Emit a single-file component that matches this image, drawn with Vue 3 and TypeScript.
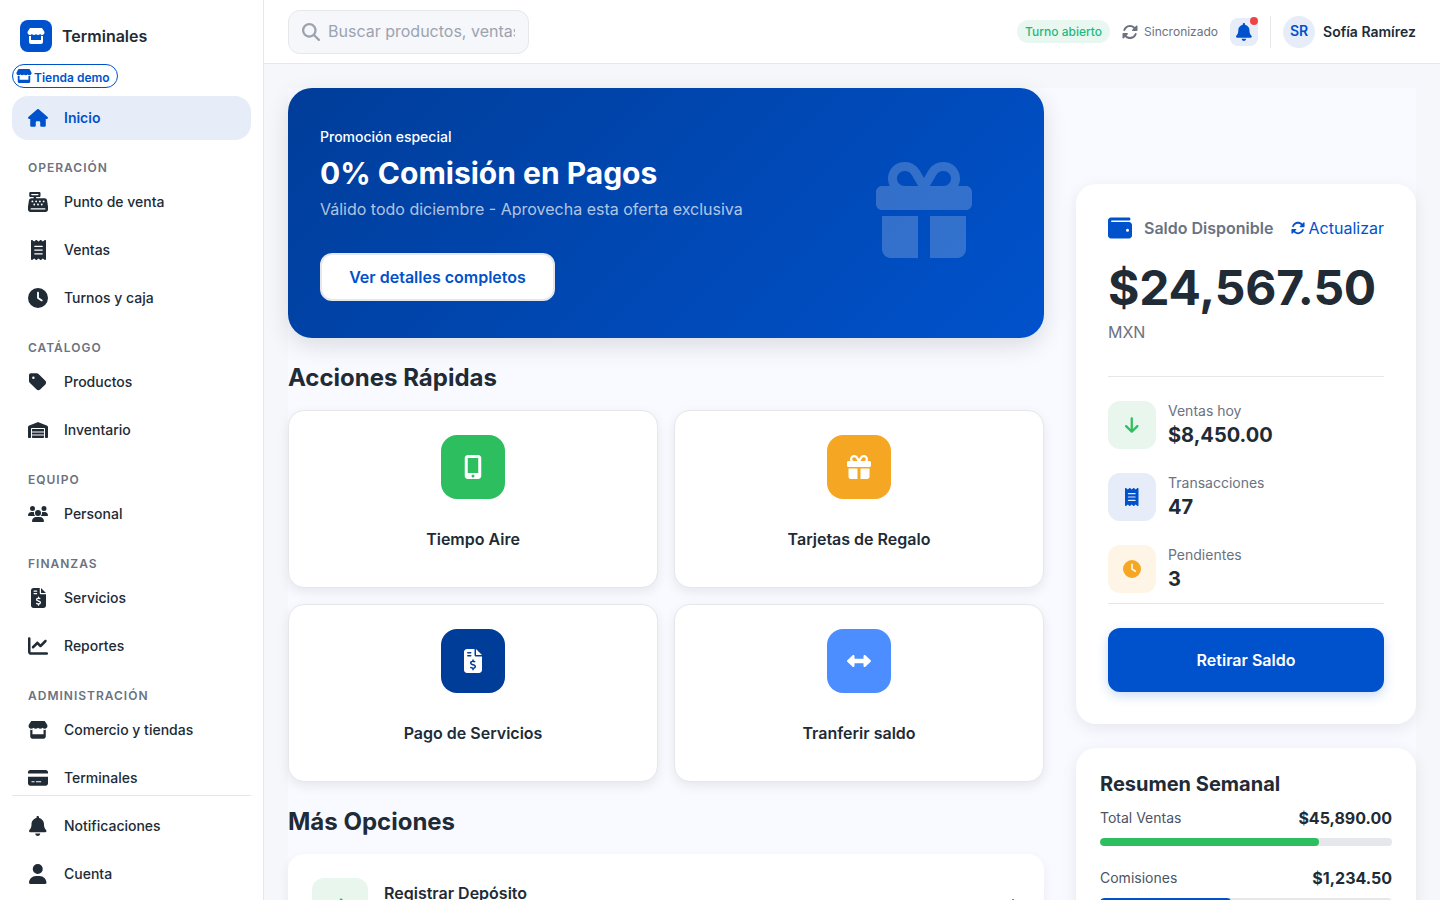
<script setup lang="ts">
import { h } from "vue";

type IconDef = { vb: string; d: string };

const icons: Record<string, IconDef> = {
  house: { vb: "0 0 576 512", d: "M575.8 255.5c0 18-15 32.1-32 32.1h-32l.7 160.2c0 2.7-.2 5.4-.5 8.1V472c0 22.1-17.9 40-40 40H456c-1.1 0-2.2 0-3.3-.1c-1.4 .1-2.8 .1-4.2 .1H416 392c-22.1 0-40-17.9-40-40V448 384c0-17.7-14.3-32-32-32H256c-17.7 0-32 14.3-32 32v64 24c0 22.1-17.9 40-40 40H160 128.1c-1.5 0-3-.1-4.5-.2c-1.2 .1-2.4 .2-3.6 .2H104c-22.1 0-40-17.9-40-40V360c0-.9 0-1.9 .1-2.8V287.6H32c-18 0-32-14-32-32.1c0-9 3-17 10-24L266.4 8c7-7 15-8 22-8s15 2 21 7L564.8 231.5c8 7 12 15 11 24z" },
  store: { vb: "0 0 576 512", d: "M547.6 103.8L490.3 13.1C485.2 5 476.1 0 466.4 0H109.6C99.9 0 90.8 5 85.7 13.1L28.3 103.8c-29.6 46.8-3.4 111.9 51.9 119.4c4 .5 8.1 .8 12.1 .8c26.1 0 49.3-11.4 65.2-29c15.9 17.6 39.1 29 65.2 29c26.1 0 49.3-11.4 65.2-29c15.9 17.6 39.1 29 65.2 29c26.2 0 49.3-11.4 65.2-29c16 17.6 39.1 29 65.2 29c4.1 0 8.1-.3 12.1-.8c55.5-7.4 81.8-72.5 52.1-119.4zM499.7 254.9l-.1 0c-5.3 .7-10.7 1.1-16.2 1.1c-12.4 0-24.3-1.9-35.4-5.3V384H128V250.6c-11.2 3.5-23.2 5.4-35.6 5.4c-5.5 0-11-.4-16.3-1.1l-.1 0c-4.1-.6-8.1-1.3-12-2.3V384v64c0 35.3 28.7 64 64 64H448c35.3 0 64-28.7 64-64V384 252.6c-4 1-8 1.8-12.3 2.3z" },
  register: { vb: "0 0 512 512", d: "M64 0C46.3 0 32 14.3 32 32V96c0 17.7 14.3 32 32 32h80v32H87c-31.6 0-58.5 23.1-63.3 54.4L1.1 364.1C.4 368.8 0 373.6 0 378.4V448c0 35.3 28.7 64 64 64H448c35.3 0 64-28.7 64-64V378.4c0-4.8-.4-9.6-1.1-14.4L488.2 214.4C483.5 183.1 456.6 160 425 160H208V128h80c17.7 0 32-14.3 32-32V32c0-17.7-14.3-32-32-32H64zM96 48H256c8.8 0 16 7.2 16 16s-7.2 16-16 16H96c-8.8 0-16-7.2-16-16s7.2-16 16-16zM64 432c0-8.8 7.2-16 16-16H432c8.8 0 16 7.2 16 16s-7.2 16-16 16H80c-8.8 0-16-7.2-16-16zm48-168a24 24 0 1 1 0-48 24 24 0 1 1 0 48zm120-24a24 24 0 1 1 -48 0 24 24 0 1 1 48 0zM160 344a24 24 0 1 1 0-48 24 24 0 1 1 0 48zM328 240a24 24 0 1 1 -48 0 24 24 0 1 1 48 0zM256 344a24 24 0 1 1 0-48 24 24 0 1 1 0 48zM424 240a24 24 0 1 1 -48 0 24 24 0 1 1 48 0zM352 344a24 24 0 1 1 0-48 24 24 0 1 1 0 48z" },
  receipt: { vb: "0 0 384 512", d: "M14 2.2C22.5-1.7 32.5-.3 39.6 5.8L80 40.4 120.4 5.8c9-7.7 22.3-7.7 31.2 0L192 40.4 232.4 5.8c9-7.7 22.2-7.7 31.2 0L304 40.4 344.4 5.8c7.1-6.1 17.1-7.5 25.6-3.6s14 12.4 14 21.8V488c0 9.4-5.5 17.9-14 21.8s-18.5 2.5-25.6-3.6L304 471.6l-40.4 34.6c-9 7.7-22.3 7.7-31.2 0L192 471.6l-40.4 34.6c-9 7.7-22.2 7.7-31.2 0L80 471.6 39.6 506.2c-7.1 6.1-17.1 7.5-25.6 3.6S0 497.4 0 488V24C0 14.6 5.5 6.1 14 2.2zM96 144c-8.8 0-16 7.2-16 16s7.2 16 16 16H288c8.8 0 16-7.2 16-16s-7.2-16-16-16H96zM80 352c0 8.8 7.2 16 16 16H288c8.8 0 16-7.2 16-16s-7.2-16-16-16H96c-8.8 0-16 7.2-16 16zM96 240c-8.8 0-16 7.2-16 16s7.2 16 16 16H288c8.8 0 16-7.2 16-16s-7.2-16-16-16H96z" },
  clock: { vb: "0 0 512 512", d: "M256 0a256 256 0 1 1 0 512A256 256 0 1 1 256 0zM232 120V256c0 8 4 15.5 10.7 20l96 64c11 7.4 25.9 4.4 33.3-6.7s4.4-25.9-6.7-33.3L280 243.2V120c0-13.3-10.7-24-24-24s-24 10.7-24 24z" },
  tag: { vb: "0 0 448 512", d: "M0 80V229.5c0 17 6.7 33.3 18.7 45.3l176 176c25 25 65.5 25 90.5 0L418.7 317.3c25-25 25-65.5 0-90.5l-176-176c-12-12-28.3-18.7-45.3-18.7H48C21.5 32 0 53.5 0 80zm112 32a32 32 0 1 1 0 64 32 32 0 1 1 0-64z" },
  warehouse: { vb: "0 0 640 512", d: "M0 488V171.3c0-26.2 15.9-49.7 40.2-59.4L308.1 4.8c7.6-3.1 16.1-3.1 23.8 0L599.8 111.9c24.3 9.7 40.2 33.3 40.2 59.4V488c0 13.3-10.7 24-24 24H568c-13.3 0-24-10.7-24-24V224c0-17.7-14.3-32-32-32H128c-17.7 0-32 14.3-32 32V488c0 13.3-10.7 24-24 24H24c-13.3 0-24-10.7-24-24zm488 24H152c-13.3 0-24-10.7-24-24V432H512v56c0 13.3-10.7 24-24 24zM128 400V336H512v64H128zm0-96V224H512v80H128z" },
  users: { vb: "0 0 640 512", d: "M144 0a80 80 0 1 1 0 160A80 80 0 1 1 144 0zM512 0a80 80 0 1 1 0 160A80 80 0 1 1 512 0zM0 298.7C0 239.8 47.8 192 106.7 192h42.7c15.9 0 31 3.5 44.6 9.7c-1.3 7.2-1.9 14.7-1.9 22.3c0 38.2 16.8 72.5 43.3 96c-.2 0-.4 0-.7 0H21.3C9.6 320 0 310.4 0 298.7zM405.3 320c-.2 0-.4 0-.7 0c26.6-23.5 43.3-57.8 43.3-96c0-7.6-.7-15-1.9-22.3c13.6-6.3 28.7-9.7 44.6-9.7h42.7C592.2 192 640 239.8 640 298.7c0 11.8-9.6 21.3-21.3 21.3H405.3zM224 224a96 96 0 1 1 192 0 96 96 0 1 1 -192 0zM128 485.3C128 411.7 187.7 352 261.3 352H378.7C452.3 352 512 411.7 512 485.3c0 14.7-11.9 26.7-26.7 26.7H154.7c-14.7 0-26.7-11.9-26.7-26.7z" },
  invoice: { vb: "0 0 384 512", d: "M64 0C28.7 0 0 28.7 0 64V448c0 35.3 28.7 64 64 64H320c35.3 0 64-28.7 64-64V160H256c-17.7 0-32-14.3-32-32V0H64zM256 0V128H384L256 0zM64 80c0-8.8 7.2-16 16-16h64c8.8 0 16 7.2 16 16s-7.2 16-16 16H80c-8.8 0-16-7.2-16-16zm0 64c0-8.8 7.2-16 16-16h64c8.8 0 16 7.2 16 16s-7.2 16-16 16H80c-8.8 0-16-7.2-16-16zm128 72c8.8 0 16 7.2 16 16v17.3c8.5 1.2 16.7 3.1 24.1 5.1c8.5 2.3 13.6 11 11.3 19.6s-11 13.6-19.6 11.3c-11.1-3-22-5.2-32.1-5.3c-8.4-.1-17.4 1.8-23.6 5.5c-5.7 3.4-8.1 7.3-8.1 12.8c0 3.7 1.3 6.5 7.3 10.1c6.9 4.1 16.6 7.1 29.2 10.9l.5 .1 0 0 0 0c11.3 3.4 25.3 7.6 36.3 14.6c12.1 7.6 22.4 19.7 22.7 38.2c.3 19.3-9.6 33.3-22.9 41.6c-7.7 4.8-16.4 7.6-25.1 9.1V440c0 8.8-7.2 16-16 16s-16-7.2-16-16V422.2c-11.2-2.1-21.7-5.7-30.9-8.9l0 0c-2.1-.7-4.2-1.4-6.2-2.1c-8.4-2.8-12.9-11.9-10.1-20.2s11.9-12.9 20.2-10.1c2.5 .8 4.8 1.6 7.1 2.4l0 0 0 0 0 0c13.6 4.6 24.6 8.4 36.3 8.7c9.1 .3 17.9-1.7 23.7-5.3c5.1-3.2 7.9-7.3 7.8-14c-.1-4.6-1.8-7.8-7.7-11.6c-6.8-4.3-16.5-7.4-29-11.2l-1.6-.5 0 0c-11-3.3-24.3-7.3-34.8-13.7c-12-7.2-22.6-18.9-22.7-37.3c-.1-19.4 10.8-32.8 23.8-40.5c7.5-4.4 15.8-7.2 24.1-8.7V232c0-8.8 7.2-16 16-16z" },
  chart: { vb: "0 0 512 512", d: "M64 64c0-17.7-14.3-32-32-32S0 46.3 0 64V400c0 44.2 35.8 80 80 80H480c17.7 0 32-14.3 32-32s-14.3-32-32-32H80c-8.8 0-16-7.2-16-16V64zm406.6 86.6c12.5-12.5 12.5-32.8 0-45.3s-32.8-12.5-45.3 0L320 210.7l-57.4-57.4c-12.5-12.5-32.8-12.5-45.3 0l-112 112c-12.5 12.5-12.5 32.8 0 45.3s32.8 12.5 45.3 0L240 221.3l57.4 57.4c12.5 12.5 32.8 12.5 45.3 0l128-128z" },
  card: { vb: "0 0 576 512", d: "M64 32C28.7 32 0 60.7 0 96v32H576V96c0-35.3-28.7-64-64-64H64zM576 224H0V416c0 35.3 28.7 64 64 64H512c35.3 0 64-28.7 64-64V224zM112 352h64c8.8 0 16 7.2 16 16s-7.2 16-16 16H112c-8.8 0-16-7.2-16-16s7.2-16 16-16zm112 16c0-8.8 7.2-16 16-16H368c8.8 0 16 7.2 16 16s-7.2 16-16 16H240c-8.8 0-16-7.2-16-16z" },
  bell: { vb: "0 0 448 512", d: "M224 0c-17.7 0-32 14.3-32 32V51.2C119 66 64 130.6 64 208v18.8c0 47-17.3 92.4-48.5 127.6l-7.4 8.3c-8.4 9.4-10.4 22.9-5.3 34.4S19.4 416 32 416H416c12.6 0 24-7.4 29.2-18.9s3.1-25-5.3-34.4l-7.4-8.3C401.3 319.2 384 273.9 384 226.8V208c0-77.4-55-142-128-156.8V32c0-17.7-14.3-32-32-32zm45.3 493.3c12-12 18.7-28.3 18.7-45.3H224 160c0 17 6.7 33.3 18.7 45.3s28.3 18.7 45.3 18.7s33.3-6.7 45.3-18.7z" },
  user: { vb: "0 0 448 512", d: "M224 256A128 128 0 1 0 224 0a128 128 0 1 0 0 256zm-45.7 48C79.8 304 0 383.8 0 482.3C0 498.7 13.3 512 29.7 512H418.3c16.4 0 29.7-13.3 29.7-29.7C448 383.8 368.2 304 269.7 304H178.3z" },
  search: { vb: "0 0 512 512", d: "M416 208c0 45.9-14.9 88.3-40 122.7L502.6 457.4c12.5 12.5 12.5 32.8 0 45.3s-32.8 12.5-45.3 0L330.7 376c-34.4 25.2-76.8 40-122.7 40C93.1 416 0 322.9 0 208S93.1 0 208 0S416 93.1 416 208zM208 352a144 144 0 1 0 0-288 144 144 0 1 0 0 288z" },
  rotate: { vb: "0 0 512 512", d: "M142.9 142.9c62.2-62.2 162.7-62.5 225.3-1L327 183c-6.9 6.9-8.9 17.2-5.2 26.2s12.5 14.8 22.2 14.8H463.5c0 0 0 0 0 0H472c13.3 0 24-10.7 24-24V72c0-9.7-5.8-18.5-14.8-22.2s-19.3-1.7-26.2 5.2L413.4 96.6c-87.6-86.5-228.7-86.2-315.8 1C73.2 122 55.6 150.7 44.8 181.4c-5.9 16.7 2.9 34.9 19.5 40.8s34.9-2.9 40.8-19.5c7.7-21.8 20.2-42.3 37.8-59.8zM16 312v7.6 .7V440c0 9.7 5.8 18.5 14.8 22.2s19.3 1.7 26.2-5.2l41.6-41.6c87.6 86.5 228.7 86.2 315.8-1c24.4-24.4 42.1-53.1 52.9-83.7c5.9-16.7-2.9-34.9-19.5-40.8s-34.9 2.9-40.8 19.5c-7.7 21.8-20.2 42.3-37.8 59.8c-62.2 62.2-162.7 62.5-225.3 1L185 329c6.9-6.9 8.9-17.2 5.2-26.2s-12.5-14.8-22.2-14.8H48.4h-.7H40c-13.3 0-24 10.7-24 24z" },
  wallet: { vb: "0 0 512 512", d: "M64 32C28.7 32 0 60.7 0 96V416c0 35.3 28.7 64 64 64H448c35.3 0 64-28.7 64-64V192c0-35.3-28.7-64-64-64H80c-8.8 0-16-7.2-16-16s7.2-16 16-16H448c17.7 0 32-14.3 32-32s-14.3-32-32-32H64zM416 272a32 32 0 1 1 0 64 32 32 0 1 1 0-64z" },
  gift: { vb: "0 0 512 512", d: "M190.5 68.8L225.3 128H224 152c-22.1 0-40-17.9-40-40s17.9-40 40-40h2.2c14.9 0 28.8 7.9 36.3 20.8zM64 88c0 14.4 3.5 28 9.6 40H32c-17.7 0-32 14.3-32 32v64c0 17.7 14.3 32 32 32H480c17.7 0 32-14.3 32-32V160c0-17.7-14.3-32-32-32H438.4c6.1-12 9.6-25.6 9.6-40c0-48.6-39.4-88-88-88h-2.2c-31.9 0-61.5 16.9-77.7 44.4L256 85.5l-24.1-41C215.7 16.9 186.1 0 154.2 0H152C103.4 0 64 39.4 64 88zm336 0c0 22.1-17.9 40-40 40H288h-1.3l34.8-59.2C329.1 55.9 342.9 48 357.8 48H360c22.1 0 40 17.9 40 40zM32 288V464c0 26.5 21.5 48 48 48H224V288H32zM288 512H432c26.5 0 48-21.5 48-48V288H288V512z" },
  mobile: { vb: "0 0 384 512", d: "M16 64C16 28.7 44.7 0 80 0H304c35.3 0 64 28.7 64 64V448c0 35.3-28.7 64-64 64H80c-35.3 0-64-28.7-64-64V64zM224 448a32 32 0 1 0 -64 0 32 32 0 1 0 64 0zM304 64H80V384H304V64z" },
  leftRight: { vb: "0 0 512 512", d: "M504.3 273.6c4.9-4.5 7.7-10.9 7.7-17.6s-2.8-13-7.7-17.6l-112-104c-7-6.5-17.2-8.2-25.9-4.4s-14.4 12.5-14.4 22l0 56-192 0 0-56c0-9.5-5.7-18.2-14.4-22s-18.9-2.1-25.9 4.4l-112 104C2.8 243 0 249.3 0 256s2.8 13 7.7 17.6l112 104c7 6.5 17.2 8.2 25.9 4.4s14.4-12.5 14.4-22l0-56 192 0 0 56c0 9.5 5.7 18.2 14.4 22s18.9 2.1 25.9-4.4l112-104z" },
  arrowDown: { vb: "0 0 384 512", d: "M169.4 470.6c12.5 12.5 32.8 12.5 45.3 0l160-160c12.5-12.5 12.5-32.8 0-45.3s-32.8-12.5-45.3 0L224 370.8 224 64c0-17.7-14.3-32-32-32s-32 14.3-32 32l0 306.7L54.6 265.4c-12.5-12.5-32.8-12.5-45.3 0s-12.5 32.8 0 45.3l160 160z" },
  arrowRight: { vb: "0 0 448 512", d: "M438.6 278.6c12.5-12.5 12.5-32.8 0-45.3l-160-160c-12.5-12.5-32.8-12.5-45.3 0s-12.5 32.8 0 45.3L338.8 224 32 224c-17.7 0-32 14.3-32 32s14.3 32 32 32l306.7 0L233.4 393.4c-12.5 12.5-12.5 32.8 0 45.3s32.8 12.5 45.3 0l160-160z" },
  chevron: { vb: "0 0 320 512", d: "M310.6 233.4c12.5 12.5 12.5 32.8 0 45.3l-192 192c-12.5 12.5-32.8 12.5-45.3 0s-12.5-32.8 0-45.3L242.7 256 73.4 86.6c-12.5-12.5-12.5-32.8 0-45.3s32.8-12.5 45.3 0l192 192z" },
};

// height comes from the aspect of each glyph, size is the larger side
const Icon = (props: { name: string; size: number }) => {
  const def = icons[props.name];
  const [, , w, ht] = def.vb.split(" ").map(Number);
  const scale = props.size / Math.max(w, ht);
  return h(
    "svg",
    { viewBox: def.vb, width: w * scale, height: ht * scale, fill: "currentColor", "aria-hidden": "true", style: "display:block;flex:none" },
    [h("path", { d: def.d })],
  );
};
Icon.props = ["name", "size"];

const navGroups = [
  { title: "Operación", items: [{ label: "Punto de venta", icon: "register" }, { label: "Ventas", icon: "receipt" }, { label: "Turnos y caja", icon: "clock" }] },
  { title: "Catálogo", items: [{ label: "Productos", icon: "tag" }, { label: "Inventario", icon: "warehouse" }] },
  { title: "Equipo", items: [{ label: "Personal", icon: "users" }] },
  { title: "Finanzas", items: [{ label: "Servicios", icon: "invoice" }, { label: "Reportes", icon: "chart" }] },
  { title: "Administración", items: [{ label: "Comercio y tiendas", icon: "store" }, { label: "Terminales", icon: "card" }] },
];

const footerItems = [
  { label: "Notificaciones", icon: "bell" },
  { label: "Cuenta", icon: "user" },
];

const quickActions = [
  { label: "Tiempo Aire", icon: "mobile", color: "#2dbf5f" },
  { label: "Tarjetas de Regalo", icon: "gift", color: "#f5a623" },
  { label: "Pago de Servicios", icon: "invoice", color: "#003d99" },
  { label: "Tranferir saldo", icon: "leftRight", color: "#4c8dff" },
];

const stats = [
  { label: "Ventas hoy", value: "$8,450.00", icon: "arrowDown", cls: "green" },
  { label: "Transacciones", value: "47", icon: "receipt", cls: "blue" },
  { label: "Pendientes", value: "3", icon: "clock", cls: "orange" },
];

const weekly = [
  { label: "Total Ventas", value: "$45,890.00", pct: 75, color: "#2dbf5f" },
  { label: "Comisiones", value: "$1,234.50", pct: 45, color: "#0052cc" },
];
</script>

<template>
  <div class="app">
    <aside class="sidebar">
      <div class="brand">
        <div class="brand-logo"><Icon name="store" :size="18" /></div>
        <span class="brand-name">Terminales</span>
      </div>
      <div class="store-chip"><Icon name="store" :size="16" /><span class="chip-text">Tienda demo</span></div>
      <nav class="nav">
        <a class="nav-item active"><span class="nav-icon"><Icon name="house" :size="20" /></span><span class="nav-text">Inicio</span></a>
        <template v-for="group in navGroups" :key="group.title">
          <div class="nav-title">{{ group.title }}</div>
          <a v-for="item in group.items" :key="item.label" class="nav-item">
            <span class="nav-icon"><Icon :name="item.icon" :size="20" /></span><span class="nav-text">{{ item.label }}</span>
          </a>
        </template>
      </nav>
      <div class="sidebar-footer">
        <a v-for="item in footerItems" :key="item.label" class="nav-item">
          <span class="nav-icon"><Icon :name="item.icon" :size="20" /></span><span class="nav-text">{{ item.label }}</span>
        </a>
      </div>
    </aside>

    <div class="main">
      <header class="topbar">
        <label class="search">
          <Icon name="search" :size="18" />
          <input placeholder="Buscar productos, ventas..." />
        </label>
        <div class="top-right">
          <span class="shift-pill">Turno abierto</span>
          <span class="sync"><Icon name="rotate" :size="16" />Sincronizado</span>
          <button class="bell"><Icon name="bell" :size="18" /><i class="bell-dot"></i></button>
          <span class="top-sep"></span>
          <span class="avatar">SR</span>
          <span class="user-name">Sofía Ramírez</span>
        </div>
      </header>

      <div class="content">
        <div class="grid">
          <section class="left">
            <div class="hero">
              <div>
                <div class="hero-kicker">Promoción especial</div>
                <h1>0% Comisión en Pagos</h1>
                <p>Válido todo diciembre - Aprovecha esta oferta exclusiva</p>
                <button class="hero-btn">Ver detalles completos</button>
              </div>
              <div class="hero-gift"><Icon name="gift" :size="96" /></div>
            </div>

            <h2>Acciones Rápidas</h2>
            <div class="quick-grid">
              <div v-for="action in quickActions" :key="action.label" class="quick-card">
                <div class="quick-icon" :style="{ background: action.color }"><Icon :name="action.icon" :size="24" /></div>
                <div class="quick-label">{{ action.label }}</div>
              </div>
            </div>

            <h2 class="more-title">Más Opciones</h2>
            <div class="options">
              <div class="option">
                <div class="option-icon"><Icon name="arrowRight" :size="20" /></div>
                <div class="option-name">Registrar Depósito</div>
                <span class="option-chevron"><Icon name="chevron" :size="16" /></span>
              </div>
            </div>
          </section>

          <section class="right">
            <div class="balance">
              <div class="balance-head">
                <span class="wallet"><Icon name="wallet" :size="24" /></span>
                <span class="balance-label">Saldo Disponible</span>
                <a class="refresh"><Icon name="rotate" :size="14" />Actualizar</a>
              </div>
              <div class="amount">$24,567.50</div>
              <div class="currency">MXN</div>
              <div class="stats">
                <div v-for="s in stats" :key="s.label" class="stat">
                  <div class="stat-icon" :class="s.cls"><Icon :name="s.icon" :size="18" /></div>
                  <div>
                    <div class="stat-label">{{ s.label }}</div>
                    <div class="stat-value">{{ s.value }}</div>
                  </div>
                </div>
              </div>
              <button class="withdraw">Retirar Saldo</button>
            </div>

            <div class="summary">
              <h3>Resumen Semanal</h3>
              <div v-for="row in weekly" :key="row.label" class="summary-row">
                <div class="summary-line">
                  <span class="summary-label">{{ row.label }}</span>
                  <span class="summary-value">{{ row.value }}</span>
                </div>
                <div class="bar"><div class="bar-fill" :style="{ width: row.pct + '%', background: row.color }"></div></div>
              </div>
            </div>
          </section>
        </div>
      </div>
    </div>
  </div>
</template>

<style>
html,
body {
  margin: 0;
  overflow: hidden;
}
</style>

<style scoped>
.app {
  display: flex;
  height: 100vh;
  overflow: hidden;
  font-family: Inter, "Liberation Sans", sans-serif;
  color: #212b36;
  background: #f5f7fb;
}
a {
  text-decoration: none;
}
button {
  font-family: inherit;
  cursor: pointer;
}

/* sidebar */
.sidebar {
  width: 264px;
  flex: none;
  box-sizing: border-box;
  height: 100vh;
  display: flex;
  flex-direction: column;
  background: #fff;
  border-right: 1px solid #e5e7eb;
  padding: 20px 12px 0;
}
.brand {
  display: flex;
  align-items: center;
  gap: 10px;
  padding-left: 8px;
  margin-bottom: 12px;
}
.brand-logo {
  width: 32px;
  height: 32px;
  border-radius: 8px;
  background: #0052cc;
  color: #fff;
  display: flex;
  align-items: center;
  justify-content: center;
}
.brand-name {
  font-size: 16px;
  line-height: 24px;
  font-weight: 600;
}
.store-chip {
  align-self: flex-start;
  height: 24px;
  box-sizing: border-box;
  display: flex;
  align-items: center;
  gap: 2px;
  padding: 0 7px 0 3px;
  border: 1px solid #0052cc;
  border-radius: 999px;
  color: #0052cc;
  font-size: 12px;
  line-height: 18px;
  font-weight: 600;
  margin-bottom: 8px;
}
.chip-text {
  margin-top: 3px;
}
.nav {
  flex: 1;
  min-height: 0;
  overflow: hidden;
}
.nav-item {
  display: flex;
  align-items: center;
  height: 44px;
  margin-bottom: 4px;
  padding-left: 16px;
  border-radius: 16px;
  font-size: 14px;
  font-weight: 500;
  color: #212b36;
}
.nav-text {
  line-height: 20px;
  margin-top: -1px;
}
.nav-item.active {
  background: #e6edf8;
  color: #0052cc;
  font-weight: 600;
}
.nav-icon {
  width: 20px;
  margin-right: 16px;
  display: flex;
  justify-content: center;
}
.nav-title {
  height: 36px;
  box-sizing: border-box;
  padding: 15px 0 3px 16px;
  line-height: 18px;
  font-size: 12px;
  font-weight: 600;
  letter-spacing: 1px;
  text-transform: uppercase;
  color: #6b7280;
}
.sidebar-footer {
  border-top: 1px solid #e5e7eb;
  padding-top: 8px;
}

/* topbar */
.main {
  flex: 1;
  min-width: 0;
  display: flex;
  flex-direction: column;
}
.topbar {
  height: 64px;
  flex: none;
  box-sizing: border-box;
  display: flex;
  align-items: center;
  justify-content: space-between;
  padding: 0 24px;
  background: #fff;
  border-bottom: 1px solid #e5e7eb;
}
.search {
  width: 241px;
  height: 44px;
  box-sizing: border-box;
  display: flex;
  align-items: center;
  gap: 8px;
  padding: 0 13px;
  border: 1px solid #e5e7eb;
  border-radius: 12px;
  background: #f5f7fb;
  color: #9ca3af;
}
.search input {
  flex: 1;
  min-width: 0;
  border: 0;
  outline: 0;
  padding: 0 0 2px;
  background: transparent;
  font-family: inherit;
  font-size: 16px;
  color: #212b36;
}
.search input::placeholder {
  color: #9ca3af;
  opacity: 1;
}
.top-right {
  display: flex;
  align-items: center;
  gap: 12px;
}
.shift-pill {
  height: 23px;
  display: flex;
  align-items: center;
  padding: 0 8px;
  border-radius: 999px;
  background: #e8f8f1;
  color: #1fb97f;
  font-size: 12px;
  font-weight: 500;
}
.sync {
  display: flex;
  align-items: center;
  gap: 6px;
  font-size: 12px;
  color: #6b7280;
}
.bell {
  position: relative;
  width: 28px;
  height: 28px;
  padding: 0;
  border: 0;
  border-radius: 8px;
  background: #e6edf8;
  color: #0052cc;
  display: flex;
  align-items: center;
  justify-content: center;
}
.bell-dot {
  position: absolute;
  top: -1px;
  right: 0;
  width: 8px;
  height: 8px;
  border-radius: 50%;
  background: #ef4444;
}
.top-sep {
  width: 1px;
  height: 32px;
  background: #e5e7eb;
}
.avatar {
  width: 32px;
  height: 32px;
  box-sizing: border-box;
  padding-bottom: 2px;
  border-radius: 50%;
  background: #e6edf8;
  color: #0052cc;
  font-size: 14px;
  font-weight: 600;
  display: flex;
  align-items: center;
  justify-content: center;
}
.user-name {
  font-size: 14px;
  font-weight: 600;
  margin-left: -4px;
}

/* content */
.content {
  flex: 1;
  min-height: 0;
  overflow: hidden;
  padding: 24px 24px 0;
}
.grid {
  display: grid;
  grid-template-columns: 756px 340px;
  gap: 32px;
  background: #f8faff;
  min-height: 100%;
}
.hero {
  height: 250px;
  box-sizing: border-box;
  display: flex;
  justify-content: space-between;
  align-items: flex-start;
  padding: 39px 72px 0 32px;
  border-radius: 24px;
  background: linear-gradient(135deg, #003d99, #0052cc);
  box-shadow: 0 8px 24px rgba(0, 0, 0, 0.12);
  color: #fff;
}
.hero-kicker {
  font-size: 14px;
  font-weight: 500;
  line-height: 20px;
}
.hero h1 {
  margin: 6px 0 4px;
  font-size: 30px;
  line-height: 40px;
  font-weight: 700;
}
.hero p {
  margin: 0;
  font-size: 16px;
  line-height: 24px;
  color: rgba(255, 255, 255, 0.7);
}
.hero-btn {
  margin-top: 32px;
  height: 48px;
  width: 235px;
  border: 2px solid #e5e7eb;
  border-radius: 12px;
  background: #fff;
  color: #0052cc;
  font-size: 16px;
  font-weight: 600;
}
.hero-gift {
  margin-top: 35px;
  opacity: 0.2;
}
h2 {
  margin: 25px 0 17px;
  font-size: 24px;
  line-height: 30px;
  font-weight: 700;
}
.quick-grid {
  display: grid;
  grid-template-columns: 1fr 1fr;
  gap: 16px;
}
.quick-card {
  box-sizing: border-box;
  height: 178px;
  padding-top: 24px;
  display: flex;
  flex-direction: column;
  align-items: center;
  background: #fff;
  border: 1px solid #e5e7eb;
  border-radius: 16px;
  box-shadow: 0 4px 12px rgba(0, 0, 0, 0.08);
}
.quick-icon {
  width: 64px;
  height: 64px;
  border-radius: 16px;
  color: #fff;
  display: flex;
  align-items: center;
  justify-content: center;
}
.quick-label {
  margin-top: 28px;
  font-size: 16px;
  line-height: 24px;
  font-weight: 600;
}
.options {
  background: #fff;
  border-radius: 16px;
  box-shadow: 0 4px 12px rgba(0, 0, 0, 0.06);
}
.option {
  display: flex;
  align-items: flex-start;
  padding: 24px;
  gap: 16px;
}
.option-icon {
  width: 56px;
  height: 56px;
  border-radius: 12px;
  background: #e8f6ee;
  color: #2dbf5f;
  display: flex;
  align-items: center;
  justify-content: center;
}
.option-name {
  flex: 1;
  margin-top: 3px;
  font-size: 16px;
  line-height: 24px;
  font-weight: 600;
}
.option-chevron {
  height: 56px;
  display: flex;
  align-items: center;
  color: #6b7280;
}

/* right column */
.right {
  margin-top: 96px;
}
.balance {
  box-sizing: border-box;
  padding: 32px;
  background: #fff;
  border-radius: 20px;
  box-shadow: 0 4px 16px rgba(0, 0, 0, 0.08);
}
.balance-head {
  display: flex;
  align-items: center;
  height: 24px;
}
.wallet {
  color: #0052cc;
  margin-right: 12px;
}
.balance-label {
  flex: 1;
  font-size: 16px;
  font-weight: 600;
  color: #6b7280;
}
.refresh {
  display: flex;
  align-items: center;
  gap: 4px;
  font-size: 16px;
  color: #0052cc;
}
.amount {
  margin-top: 20px;
  font-size: 48px;
  line-height: 56px;
  font-weight: 700;
  letter-spacing: -0.2px;
}
.currency {
  margin-top: 4px;
  font-size: 16px;
  line-height: 24px;
  color: #6b7280;
}
.stats {
  margin-top: 32px;
  padding: 24px 0 10px;
  border-top: 1px solid #e5e7eb;
  border-bottom: 1px solid #e5e7eb;
  display: flex;
  flex-direction: column;
  gap: 24px;
}
.stat {
  display: flex;
  gap: 12px;
}
.stat-icon {
  width: 48px;
  height: 48px;
  border-radius: 12px;
  display: flex;
  align-items: center;
  justify-content: center;
}
.stat-icon.green {
  background: #e8f6ee;
  color: #2dbf5f;
}
.stat-icon.blue {
  background: #e6edf8;
  color: #0052cc;
}
.stat-icon.orange {
  background: #fef5e7;
  color: #f5a623;
}
.stat-label {
  font-size: 14px;
  line-height: 20px;
  color: #6b7280;
}
.stat-value {
  font-size: 20px;
  line-height: 28px;
  font-weight: 700;
}
.withdraw {
  display: block;
  width: 100%;
  height: 64px;
  margin-top: 24px;
  border: 0;
  border-radius: 12px;
  background: #0052cc;
  color: #fff;
  font-size: 16px;
  font-weight: 600;
  box-shadow: 0 4px 12px rgba(0, 82, 204, 0.2);
}
.summary {
  margin-top: 24px;
  padding: 24px;
  background: #fff;
  border-radius: 20px;
  box-shadow: 0 4px 16px rgba(0, 0, 0, 0.08);
}
.summary h3 {
  margin: 0 0 10px;
  font-size: 20px;
  line-height: 24px;
  font-weight: 700;
}
.summary-row {
  margin-bottom: 20px;
}
.summary-line {
  display: flex;
  justify-content: space-between;
  align-items: center;
  height: 24px;
  margin-bottom: 8px;
}
.summary-label {
  font-size: 14px;
  line-height: 20px;
  margin-top: -1px;
  color: #4b5563;
}
.summary-value {
  font-size: 16px;
  font-weight: 700;
}
.bar {
  height: 8px;
  border-radius: 4px;
  background: #e5e7eb;
  overflow: hidden;
}
.bar-fill {
  height: 100%;
  border-radius: 4px;
}
</style>
